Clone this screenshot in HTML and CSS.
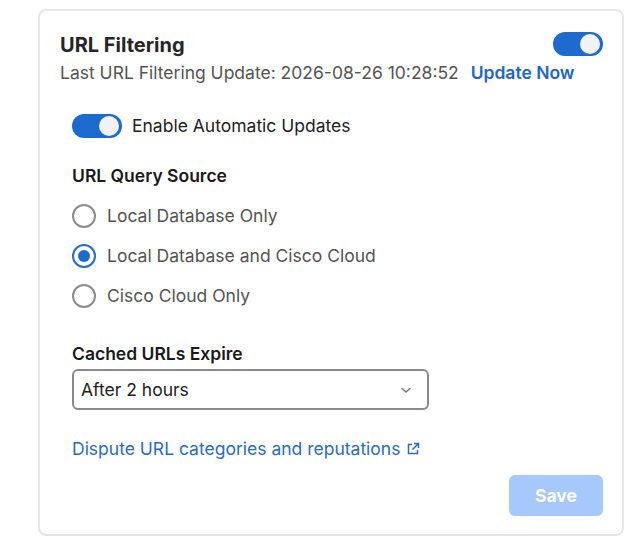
FILE: index.html
```html
<!DOCTYPE html>
<html>
<head>
    <meta charset="utf-8" />
    <title>URL Filtering</title>
    <link rel="stylesheet" href="styles.css">
</head>
<body>

<div class="card">

    <!-- header -->
    <div class="card-head">
        <div class="card-title">URL Filtering</div>
        <span class="toggle"><span class="knob"></span></span>
        <div class="card-sub">
            Last URL Filtering Update: 2026-08-26 10:28:52
            <a class="update-now" href="#">Update Now</a>
        </div>
    </div>

    <!-- body -->
    <div class="card-body">
        <div class="toggle-row">
            <span class="toggle"><span class="knob"></span></span>
            <span>Enable Automatic Updates</span>
        </div>

        <div class="label label-query">URL Query Source</div>
        <div class="radios">
            <div class="radio-row"><span class="radio"></span>Local Database Only</div>
            <div class="radio-row"><span class="radio radio-on"></span>Local Database and Cisco Cloud</div>
            <div class="radio-row"><span class="radio"></span>Cisco Cloud Only</div>
        </div>

        <div class="label label-cache">Cached URLs Expire</div>
        <div class="select">
            <span>After 2 hours</span>
            <svg width="14" height="14" viewBox="0 0 14 14"><path d="M3 5.5 L7 9 L11 5.5" fill="none" stroke="#7a7a7a" stroke-width="1.6" stroke-linecap="round" stroke-linejoin="round"/></svg>
        </div>

        <a class="dispute" href="#">Dispute URL categories and reputations
            <svg width="14" height="14" viewBox="0 0 14 14"><path d="M6 2.5 H2.5 V11.5 H11.5 V8" fill="none" stroke="#2a6bc4" stroke-width="1.5"/><path d="M8 1.5 H12.5 V6 M12.5 1.5 L6.5 7.5" fill="none" stroke="#2a6bc4" stroke-width="1.5"/></svg>
        </a>
    </div>

    <div class="card-foot">
        <a class="btn-save" href="#">Save</a>
    </div>
</div>

</body>
</html>
```

FILE: styles.css
```css
body{
    margin: 0; padding: 0;
    background: #fff;
    font-family: Inter, "Noto Sans", sans-serif;
    font-size: 17.5px; color: #222;
}
a{text-decoration: none;}

/* card */
.card{
    width: 586px;
    margin: 9px 0 0 38px;
    border: 2px solid #e6e6e6;
    border-radius: 8px;
    background: #fff;
    padding: 22px 19px 18px 20px;
    box-sizing: border-box;
}

/* header: title + toggle on one row, the update line spans below */
.card-head{
    display: grid;
    grid-template-columns: 1fr auto;
    align-items: start;
}
.card-title{
    font-size: 20px; line-height: 24px; font-weight: 700; color: #262626;
}
.card-sub{
    grid-column: 1 / -1;
    margin-top: 4px;
    line-height: 24px; color: #555;
    white-space: nowrap;
}
.update-now{
    margin-left: 7px;
    font-weight: 600; color: #2066c8;
}

/* toggle */
.toggle{
    width: 50px; height: 24px;
    border-radius: 12px;
    background: #1e6bd0;
    position: relative;
    display: inline-block;
    flex-shrink: 0;
}
.card-head .toggle{margin-top: -1px;}
.knob{
    position: absolute; top: 2px; right: 3px;
    width: 20px; height: 20px; border-radius: 50%;
    background: #f2f2f2;
}

.card-body{
    padding-left: 12px;
}
.toggle-row{
    margin-top: 29px;
    display: flex; align-items: center; gap: 10px;
    line-height: 24px; color: #222;
}

.label{
    font-weight: 600; line-height: 24px; color: #1a1a1a;
}
.label-query{margin-top: 26px;}
.label-cache{margin-top: 34px;}

/* radios */
.radios{
    margin-top: 16px;
    display: flex; flex-direction: column; gap: 16px;
}
.radio-row{
    display: flex; align-items: center; gap: 11px;
    line-height: 24px; color: #545454;
}
.radio{
    width: 24px; height: 24px; box-sizing: border-box;
    border: 2px solid #8c8c8c; border-radius: 50%;
    background: #fff;
    display: flex; align-items: center; justify-content: center;
}
.radio-on{border-color: #2a6bd0;}
.radio-on:after{
    content: ""; width: 12px; height: 12px; border-radius: 50%;
    background: #1e6bd0;
}

/* select */
.select{
    margin-top: 3px;
    width: 357px; height: 41px; box-sizing: border-box;
    border: 2px solid #8a8a8a; border-radius: 6px;
    display: flex; align-items: center; justify-content: space-between;
    padding: 0 14px 0 7px;
    color: #222;
}

.dispute{
    margin-top: 27px;
    display: inline-flex; align-items: center; gap: 6px;
    line-height: 24px; color: #2a6bc4;
}

.card-foot{
    margin-top: 14px;
    display: flex; justify-content: flex-end;
}
.btn-save{
    width: 94px; height: 41px; line-height: 41px;
    border-radius: 6px;
    background: #a6c8fb;
    color: #fff; font-weight: 700; text-align: center;
}
```
